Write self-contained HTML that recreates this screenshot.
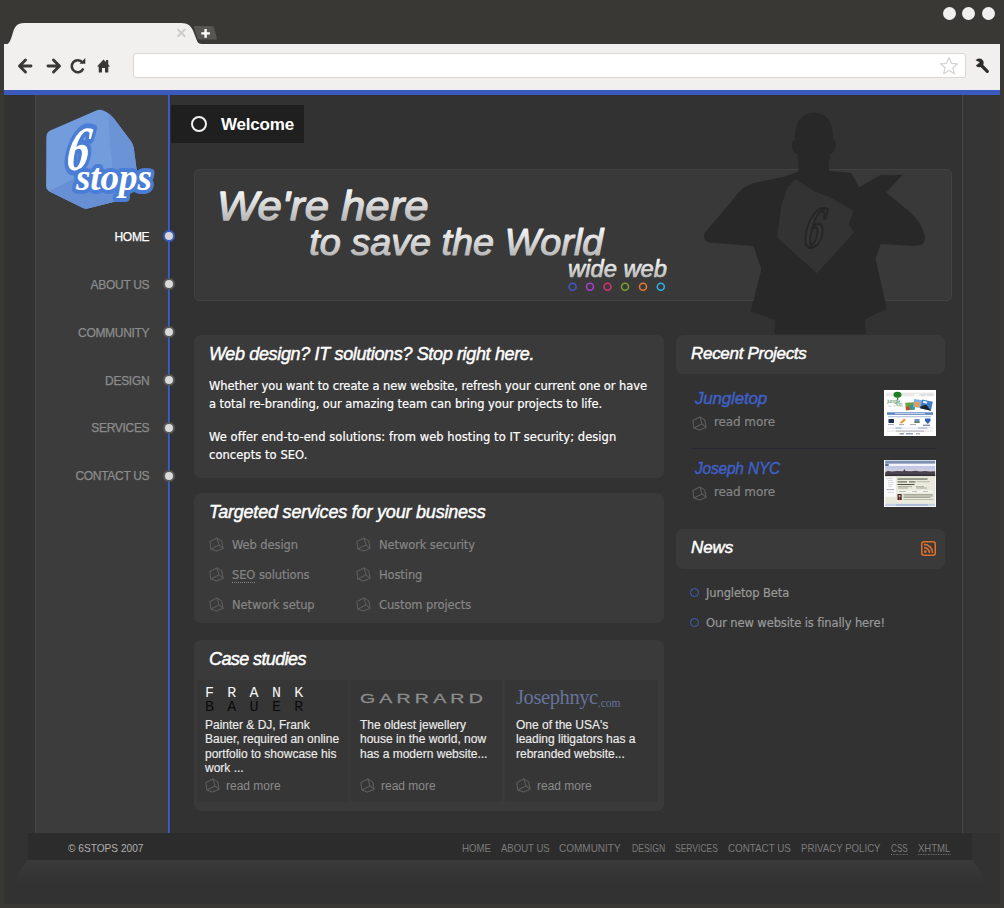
<!DOCTYPE html>
<html lang="en">
<head>
<meta charset="utf-8">
<title>6stops</title>
<style>
*{box-sizing:border-box;margin:0;padding:0}
html,body{width:1004px;height:908px;overflow:hidden}
body{background:#3a3835;font-family:"Liberation Sans",sans-serif;position:relative}
.abs{position:absolute}
/* browser chrome */
#toolbar{left:4px;top:44px;width:996px;height:46px;background:#f1f0ee}
#blue{left:4px;top:90px;width:996px;height:5px;background:#3a5bbd}
#url{left:133px;top:53px;width:833px;height:25px;background:#fff;border:1px solid #d9d8d6;border-radius:3px}
.dot{width:13px;height:13px;border-radius:50%;background:#f1f0ee;top:7px}
/* page */
#page{left:4px;top:95px;width:996px;height:809px;background:#323232;overflow:hidden}
#side{left:35px;top:95px;width:133px;height:738px;background:#3c3c3c;border-left:1px solid #444}
#vline{left:168px;top:95px;width:3px;height:738px;background:#3a5bbd;border-right:1px solid #2c2c2c}
#rline{left:962px;top:95px;width:1px;height:738px;background:#4a4a4a}
#rcol{left:963px;top:95px;width:37px;height:738px;background:#353535}
.nav{-webkit-text-stroke:.25px;right:854.700px;font-size:12px;letter-spacing:-.3px;color:#8c8c8c;white-space:nowrap;line-height:14px;text-align:right}
.nav.on{color:#fff}
.nd{left:163px;width:12px;height:12px;border-radius:50%;background:#dadada;border:2.8px solid #585858}
.nd.on{background:#d6d6d8;border-color:#3a5bbd}
#welcome{left:171px;top:105px;width:133px;height:38px;background:#1f1f1f}
#welcome b{position:absolute;left:50px;top:9px;font-size:17px;color:#fff;line-height:22px;letter-spacing:-.2px}
#welcome i{position:absolute;left:20px;top:11px;width:16px;height:16px;border:2.5px solid #f2f2f2;border-radius:50%}
.panel{background:#3a3a3a;border-radius:7px}
#hero{left:194px;top:169px;width:758px;height:132px;background:#393939;border:1px solid #424242;border-radius:5px}
.grad{background:linear-gradient(#ffffff 15%,#b9b9b9 85%);-webkit-background-clip:text;background-clip:text;color:transparent;font-style:italic;white-space:nowrap}
h2{font-weight:normal;font-style:italic;color:#fff;font-size:18px;line-height:22px;white-space:nowrap;position:absolute;letter-spacing:-.2px;-webkit-text-stroke:.45px;transform-origin:0 50%}
.body{-webkit-text-stroke:.2px;font-family:"DejaVu Sans","Liberation Sans",sans-serif;font-size:11.5px;line-height:18px;color:#fff;white-space:nowrap}
.li{-webkit-text-stroke:.2px;font-family:"DejaVu Sans","Liberation Sans",sans-serif;font-size:11.5px;line-height:16px;color:#858585;white-space:nowrap;letter-spacing:-.1px}
.card{background:#363636;top:680px;width:151px;height:122px}
.ct{-webkit-text-stroke:.15px;font-size:12px;line-height:14.3px;color:#ececec;white-space:nowrap}
.rm{font-size:12px;line-height:14px;color:#8a8a8a;white-space:nowrap}
.cube{width:15px;height:15px}
#foot{left:28px;top:833px;width:944px;height:27px;background:#2c2c2c}
.fl{font-size:11.5px;color:#7b7b7b;white-space:nowrap;line-height:13px;top:842px;transform-origin:0 50%}
</style>
</head>
<body>
<svg width="0" height="0" style="position:absolute">
  <defs>
    <g id="cube" fill="none" stroke="#5c5c5c" stroke-width="1.1" stroke-linejoin="round">
      <path d="M7.900 .9 L12.700 3.900 L14.100 11.400 L7.400 14.100 L1.800 12 L.9 4.500 Z"/>
      <path d="M7.900 .9 L10 7.900 L14.100 11.400 M10 7.900 L1.800 12"/>
    </g>
  </defs>
</svg>

<!-- browser chrome -->
<svg class="abs" style="left:0;top:0" width="260" height="46" viewBox="0 0 260 46">
  <path d="M4 46 L4 45.500 C9 44.500 10.500 41 12.500 34 C14.500 26.500 17 23 24 23 L181 23 C188 23 191 26 193 30.500 L196.500 39.500 C197.500 42.500 198.700 44 202 44 L260 44 L260 46 Z" fill="#f1f0ee"/>
  <path d="M193.800 26 L211.500 26 C213 26 213.700 26.700 214.200 28.200 L217.200 39.400 L199.500 39.400 C198.300 39.400 197.700 38.800 197.200 37.500 Z" fill="#575652"/>
  <path d="M201.300 33.400 H209.900 M205.600 29.100 V37.700" stroke="#fff" stroke-width="2.400"/>
  <path d="M177.600 29.100 L185.200 36.700 M185.200 29.100 L177.600 36.700" stroke="#cdccce" stroke-width="2"/>
</svg>
<div class="abs dot" style="left:943px"></div>
<div class="abs dot" style="left:962px"></div>
<div class="abs dot" style="left:982px"></div>
<div class="abs" id="toolbar"></div>
<div class="abs" id="url"></div>
<div class="abs" id="blue"></div>
<svg class="abs" style="left:0;top:44px" width="1004" height="46" viewBox="0 44 1004 46">
  <g stroke="#3a3835" stroke-width="2.9" fill="none" stroke-linecap="round" stroke-linejoin="round">
    <path d="M31 66 H20 M25.500 60 L19.500 66 L25.500 72"/>
    <path d="M48 66 H59 M53.500 60 L59.500 66 L53.500 72"/>
  </g>
  <path d="M82.500 62.500 A6 6 0 1 0 83.300 68.500" stroke="#3a3835" stroke-width="2.6" fill="none"/>
  <path d="M79.500 63.800 L85.300 63.800 L85.300 58 Z" fill="#3a3835"/>
  <path d="M97 66.500 L103.500 59.500 L106 62 L106 60 L108.200 60 L108.200 64.300 L110 66.500 L108.300 66.500 L108.300 72.500 L105 72.500 L105 68 L102 68 L102 72.500 L98.700 72.500 L98.700 66.500 Z" fill="#3a3835"/>
  <path d="M949 57.500 L951.500 63.300 L957.600 63.800 L952.900 67.800 L954.400 73.800 L949 70.500 L943.600 73.800 L945.100 67.800 L940.400 63.800 L946.500 63.300 Z" fill="#fff" stroke="#d4d3d1" stroke-width="1.2" stroke-linejoin="round"/>
  <g>
    <path d="M980.500 64.500 L987.300 71.300" stroke="#2e2c2a" stroke-width="3.2" stroke-linecap="round"/>
    <circle cx="979.300" cy="62.800" r="4.400" fill="#2e2c2a"/>
    <path d="M979.800 62.300 L972 58.800 L972 62 L975.500 66 Z" fill="#f1f0ee"/>
  </g>
</svg>

<!-- page -->
<div class="abs" id="page"></div>
<div class="abs" id="side"></div>
<div class="abs" id="rcol"></div>
<div class="abs" id="rline"></div>
<div class="abs" id="vline"></div>

<svg class="abs" style="left:36px;top:100px" width="130" height="115" viewBox="0 0 1004 888">
  <path d="M110 235 L470 80 Q500 68 540 90 Q575 105 600 140 L735 320 Q750 340 755 370 L780 560 L720 740 Q712 760 690 765 L400 838 Q380 842 355 830 L100 705 Q78 692 78 670 L80 285 Q82 248 110 235 Z" fill="#739cdc"/>
  <path d="M560 110 Q585 118 600 140 L735 320 Q750 340 755 370 L780 560 L720 740 L600 610 L570 330 Z" fill="#6b94d7"/>
  <path d="M100 705 L330 590 L600 610 L720 740 Q712 760 690 765 L400 838 Q380 842 355 830 Z" fill="#6790d4"/>
  <g font-family="'Liberation Serif',serif" font-style="italic" font-weight="bold" fill="#fff" stroke="#4a7dd6" stroke-linejoin="round" paint-order="stroke">
    <text x="0" y="0" font-size="400" stroke-width="62" transform="translate(222 540) skewX(-9) scale(.86 1.22)">6</text>
    <text x="308" y="694" font-size="300" stroke-width="62" textLength="588" lengthAdjust="spacingAndGlyphs">stops</text>
  </g>
</svg>

<div class="abs nav on" style="top:229.5px">HOME</div><div class="abs nd on" style="top:230.0px"></div>
<div class="abs nav" style="top:277.5px">ABOUT US</div><div class="abs nd" style="top:278.0px"></div>
<div class="abs nav" style="top:325.5px">COMMUNITY</div><div class="abs nd" style="top:326.0px"></div>
<div class="abs nav" style="top:373.5px">DESIGN</div><div class="abs nd" style="top:374.0px"></div>
<div class="abs nav" style="top:421px">SERVICES</div><div class="abs nd" style="top:421.5px"></div>
<div class="abs nav" style="top:469px">CONTACT US</div><div class="abs nd" style="top:469.5px"></div>

<div class="abs" id="welcome"><i></i><b>Welcome</b></div>

<div class="abs" id="hero"></div>
<svg class="abs" style="left:194px;top:169px" width="500" height="132" viewBox="194 169 500 132">
  <defs>
    <linearGradient id="g1" gradientUnits="userSpaceOnUse" x1="0" y1="186" x2="0" y2="222"><stop offset="0" stop-color="#fff"/><stop offset="1" stop-color="#b4b4b4"/></linearGradient>
    <linearGradient id="g2" gradientUnits="userSpaceOnUse" x1="0" y1="225" x2="0" y2="257"><stop offset="0" stop-color="#fff"/><stop offset="1" stop-color="#b4b4b4"/></linearGradient>
    <linearGradient id="g3" gradientUnits="userSpaceOnUse" x1="0" y1="259" x2="0" y2="279"><stop offset="0" stop-color="#fff"/><stop offset="1" stop-color="#b4b4b4"/></linearGradient>
  </defs>
  <g font-family="'Liberation Sans',sans-serif" font-style="italic" stroke-linejoin="round">
    <text id="h1a" x="217" y="219.700" font-size="41.500" fill="url(#g1)" stroke="url(#g1)" stroke-width="1.3" textLength="211.500" lengthAdjust="spacingAndGlyphs">We're here</text>
    <text id="h1b" x="309.300" y="255" font-size="37" fill="url(#g2)" stroke="url(#g2)" stroke-width="1.1" textLength="294" lengthAdjust="spacingAndGlyphs">to save the World</text>
    <text id="h1c" x="568" y="277.200" font-size="24" fill="url(#g3)" stroke="url(#g3)" stroke-width=".7" textLength="99" lengthAdjust="spacingAndGlyphs">wide web</text>
  </g>
  <g fill="none" stroke-width="1.6">
    <circle cx="572.600" cy="286.700" r="3.500" stroke="#4157c0"/>
    <circle cx="590" cy="286.700" r="3.500" stroke="#a63fd0"/>
    <circle cx="607.500" cy="286.700" r="3.500" stroke="#d6336f"/>
    <circle cx="625" cy="286.700" r="3.500" stroke="#7a9e2d"/>
    <circle cx="643" cy="286.700" r="3.500" stroke="#e2792f"/>
    <circle cx="660.800" cy="286.700" r="3.500" stroke="#2fb0e0"/>
  </g>
</svg>
<svg class="abs" style="left:690px;top:100px" width="260" height="240" viewBox="0 0 984 908">
  <path fill="#282828" d="M470 48 C520 48 545 90 540 150 C552 150 556 165 548 185 C544 198 538 203 530 203 C528 225 524 250 526 268 L610 275 L640 330 L720 285 L805 283 L742 350 L782 382 C830 420 862 450 872 472 C884 498 892 515 888 530 C884 548 870 552 850 552 L722 545 L702 600 L745 790 L662 830 L666 886 L320 886 L322 832 L230 800 L270 640 L240 552 L80 540 C55 538 48 520 56 502 L160 380 C190 335 215 322 250 312 L355 290 L410 270 C412 250 410 225 405 203 C395 203 390 195 388 185 C382 165 386 152 398 150 C394 90 420 48 470 48 Z"/>
  <path fill="#333" d="M400 300 L470 345 L530 368 L620 420 L600 470 L622 500 L480 656 L330 520 L345 400 L370 330 Z"/>
  <text x="0" y="0" transform="translate(425 558) skewX(-10) scale(.85 1.3)" font-family="'Liberation Serif',serif" font-style="italic" font-weight="bold" font-size="170" fill="#363636" stroke="#262626" stroke-width="8">6</text>
</svg>

<div class="abs panel" style="left:194px;top:335px;width:470px;height:143px"></div>
<h2 id="hd1" style="left:209px;top:343px;letter-spacing:-.35px">Web design? IT solutions? Stop right here.</h2>
<div class="abs body" id="p1" style="left:209px;top:377px;letter-spacing:-.06px">Whether you want to create a new website, refresh your current one or have<br>a total re-branding, our amazing team can bring your projects to life.</div>
<div class="abs body" id="p2" style="left:209px;top:428px;letter-spacing:.06px">We offer end-to-end solutions: from web hosting to IT security; design<br>concepts to SEO.</div>

<div class="abs panel" style="left:194px;top:493px;width:470px;height:130px"></div>
<h2 id="hd2" style="left:209px;top:501px">Targeted services for your business</h2>
<svg class="abs cube" style="left:209px;top:536.5px" viewBox="0 0 15 15"><use href="#cube"/></svg><div class="abs li" style="left:232px;top:536.5px">Web design</div>
<svg class="abs cube" style="left:209px;top:566.5px" viewBox="0 0 15 15"><use href="#cube"/></svg><div class="abs li" style="left:232px;top:566.5px"><span style="border-bottom:1px dotted #858585">SEO</span> solutions</div>
<svg class="abs cube" style="left:209px;top:596.5px" viewBox="0 0 15 15"><use href="#cube"/></svg><div class="abs li" style="left:232px;top:596.5px">Network setup</div>
<svg class="abs cube" style="left:356px;top:536.5px" viewBox="0 0 15 15"><use href="#cube"/></svg><div class="abs li" style="left:379px;top:536.5px">Network security</div>
<svg class="abs cube" style="left:356px;top:566.5px" viewBox="0 0 15 15"><use href="#cube"/></svg><div class="abs li" style="left:379px;top:566.5px">Hosting</div>
<svg class="abs cube" style="left:356px;top:596.5px" viewBox="0 0 15 15"><use href="#cube"/></svg><div class="abs li" style="left:379px;top:596.5px">Custom projects</div>
<div class="abs panel" style="left:194px;top:640px;width:470px;height:171px"></div>
<h2 id="hd3" style="left:209px;top:648px;letter-spacing:-.6px">Case studies</h2>
<div class="abs card" style="left:197px"></div>
<div class="abs card" style="left:351px"></div>
<div class="abs card" style="left:505px;width:153px"></div>
<div class="abs" id="fb1" style="left:205px;top:686px;font-family:'Liberation Mono',monospace;font-size:15px;line-height:16px;color:#f4f4f4;white-space:nowrap;letter-spacing:13.3px">FRANK</div>
<div class="abs" id="fb2" style="left:205px;top:699.5px;font-family:'Liberation Mono',monospace;font-size:15px;line-height:16px;color:#0c0c0c;white-space:nowrap;letter-spacing:13.3px">BAUER</div>
<div class="abs ct" id="c1" style="left:205px;top:718px">Painter &amp; DJ, Frank<br>Bauer, required an online<br>portfolio to showcase his<br>work ...</div>
<div class="abs" id="gar" style="left:360px;top:690.500px;font-size:13px;line-height:16px;color:#8c8c8c;white-space:nowrap;letter-spacing:2.800px;-webkit-text-stroke:.3px;transform:scaleX(1.5);transform-origin:0 0">GARRARD</div>
<div class="abs ct" id="c2" style="left:360px;top:718px">The oldest jewellery<br>house in the world, now<br>has a modern website...</div>
<div class="abs" id="jos" style="left:516px;top:685px;font-family:'Liberation Serif',serif;font-size:20.5px;line-height:24px;color:#66739c;white-space:nowrap;letter-spacing:-.4px">Josephnyc<span style="font-size:11.5px;letter-spacing:0;position:relative;top:3px">.com</span></div>
<div class="abs ct" id="c3" style="left:516px;top:718px">One of the USA's<br>leading litigators has a<br>rebranded website...</div>
<svg class="abs cube" style="left:205px;top:778px" viewBox="0 0 15 15"><use href="#cube"/></svg><div class="abs rm" style="left:226px;top:779px">read more</div>
<svg class="abs cube" style="left:360px;top:778px" viewBox="0 0 15 15"><use href="#cube"/></svg><div class="abs rm" style="left:381px;top:779px">read more</div>
<svg class="abs cube" style="left:516px;top:778px" viewBox="0 0 15 15"><use href="#cube"/></svg><div class="abs rm" style="left:537px;top:779px">read more</div>

<div class="abs panel" style="left:676px;top:335px;width:269px;height:39px"></div>
<h2 id="hd4" style="left:691px;top:342.5px;font-size:17px;letter-spacing:-.3px">Recent Projects</h2>
<h2 id="pj1" style="left:695px;top:388px;font-size:17px;color:#3f60c6">Jungletop</h2>
<svg class="abs cube" style="left:692px;top:415.500px" viewBox="0 0 15 15"><use href="#cube"/></svg><div class="abs li" id="rm1" style="left:714px;top:414px;font-size:12px">read more</div>
<div class="abs" style="left:691px;top:448px;width:245px;height:0;border-top:1px dotted #1f2134"></div>
<h2 id="pj2" style="left:695px;top:458px;font-size:17px;transform:scaleX(.91);color:#3f60c6">Joseph NYC</h2>
<svg class="abs cube" style="left:692px;top:485.500px" viewBox="0 0 15 15"><use href="#cube"/></svg><div class="abs li" id="rm2" style="left:714px;top:484px;font-size:12px">read more</div>
<svg class="abs" style="left:884px;top:390px" width="52" height="46" viewBox="0 0 52 46">
  <rect width="52" height="46" fill="#fff"/>
  <rect x="2" y="2.600" width="48" height="3.800" fill="#e9e9e9"/>
  <rect x="30" y="4" width="5" height="1.600" fill="#fff"/><rect x="37" y="4" width="4.500" height="1.600" fill="#dcdcdc"/><rect x="43.500" y="4" width="5" height="1.600" fill="#dcdcdc"/>
  <ellipse cx="13.500" cy="4.800" rx="4" ry="3" fill="#1f7d22"/>
  <rect x="13" y="7" width="1.200" height="3" fill="#3c7d4c"/>
  <text x="3.200" y="12.500" font-family="'Liberation Sans',sans-serif" font-size="5.500" fill="#3f8a5a" letter-spacing="-.3">jungle</text>
  <text x="12" y="16" font-family="'Liberation Sans',sans-serif" font-size="5" fill="#5a9a6e" letter-spacing="-.3">top</text>
  <g transform="rotate(-4 26 16)"><rect x="21.500" y="12.500" width="9" height="7.500" fill="#6c9e3a"/><rect x="22" y="16.500" width="3.500" height="3.500" fill="#c2452f"/><rect x="26" y="15" width="4.500" height="4.500" fill="#2d96a5"/></g>
  <g transform="rotate(8 33 14)"><rect x="29.500" y="9.500" width="8" height="8" fill="#7fb1e2"/><rect x="31" y="12" width="4.500" height="5" fill="#f09a3e"/></g>
  <g transform="rotate(12 42 15)"><rect x="37" y="10.500" width="11" height="9" fill="#3f7fc6"/><path d="M37 17.500 L42 14.500 L48 19.500 L37 19.500 Z" fill="#1c2430"/><rect x="38.500" y="11.500" width="4" height="2" fill="#e9f1fa"/></g>
  <rect x="4" y="15.500" width="3" height="1" fill="#d5d5d5"/><rect x="9" y="15.500" width="3" height="1" fill="#d5d5d5"/><rect x="14" y="15.500" width="5" height="1" fill="#d5d5d5"/>
  <rect x="3" y="22.300" width="46" height="2.600" fill="#5c87c0"/><rect x="11" y="23.100" width="30" height="1" fill="#c9d9ee"/>
  <rect x="4" y="26.300" width="43" height=".9" fill="#9fb4d0"/>
  <rect x="4.500" y="29" width="5.500" height="4" rx=".6" fill="#1f2a5c"/>
  <path d="M15.500 33 L20 28.500 L22 30 L18 33.500 Z" fill="#ee9b32"/>
  <rect x="30.500" y="29" width="5" height="4" fill="#6a8fc4"/><rect x="30.500" y="31.500" width="5" height="1.500" fill="#5d7d4b"/>
  <path d="M41 28.500 L46.500 28.500 L46.500 31 L43.800 34 L41 31 Z" fill="#2b62b8"/>
  <rect x="4" y="34.300" width="6" height=".8" fill="#8d8d9c"/><rect x="15" y="34.300" width="5" height=".8" fill="#8d8d9c"/><rect x="26" y="34.300" width="6" height=".8" fill="#8d8d9c"/><rect x="39" y="34.600" width="7" height="1.400" fill="#7f8fb0"/>
  <rect x="3" y="37.600" width="46" height=".9" fill="#d9dde6"/><rect x="11.500" y="37.600" width="6" height=".9" fill="#8fa0c4"/><rect x="34" y="37.600" width="9.500" height=".9" fill="#8fa0c4"/>
  <rect x="3" y="40.600" width="46" height=".9" fill="#dedede"/><rect x="12" y="40.600" width="28" height=".9" fill="#a9a9b3"/>
  <rect x="15.500" y="43.300" width="4.500" height="1" fill="#5f6f9f"/><rect x="22" y="43.300" width="7" height="1" fill="#5f6f9f"/><rect x="32" y="43.300" width="4" height="1" fill="#8b8b98"/>
</svg>
<svg class="abs" style="left:884px;top:460px" width="52" height="47" viewBox="0 0 52 47">
  <defs><linearGradient id="sky" x1="0" y1="0" x2="0" y2="1"><stop offset="0" stop-color="#bcc3ea"/><stop offset="1" stop-color="#d9d3dc"/></linearGradient></defs>
  <rect width="52" height="47" fill="#fff"/>
  <rect x="1.200" y=".6" width="50" height="3.200" fill="#7d91b1"/>
  <rect x="1.200" y="3.800" width="50" height="2.300" fill="#f3f5fa"/><rect x="1.200" y="3.800" width="3.500" height="2.300" fill="#5e6f96"/>
  <rect x="1.200" y="6.100" width="50" height="6" fill="url(#sky)"/>
  <path d="M1.200 12 L4 11 L8 11.500 L13 11 L19 11.300 L20.500 9 L21.500 11 L27 11.300 L32 10.800 L36 11.400 L41 10.900 L46 11.500 L51.200 11.200 L51.200 16.200 L1.200 16.200 Z" fill="#4a4450"/>
  <rect x="1.200" y="14.500" width="50" height="1.700" fill="#352f38"/>
  <rect x="1.200" y="16.200" width="50" height="28" fill="#e9eadc"/>
  <rect x="1.200" y="16.800" width="10.800" height="20" fill="#fafafa"/>
  <g fill="#c8cbd6"><rect x="2.500" y="18" width="6" height=".8"/><rect x="4" y="20" width="5" height=".7"/><rect x="4" y="22" width="6" height=".7"/><rect x="4" y="24.300" width="5" height=".7"/><rect x="4" y="26.300" width="4" height=".7"/><rect x="2.500" y="29.200" width="7.500" height=".9" fill="#9ea2b0"/><rect x="4" y="32" width="6" height=".7"/></g>
  <g fill="#8f907f"><rect x="13.500" y="18.200" width="30" height="1.700"/><rect x="13.500" y="21" width="9.500" height="1.700"/><rect x="25" y="21" width="6.500" height="1.700"/><rect x="33" y="21.200" width="13" height="1" fill="#b9baa9"/></g>
  <rect x="13.500" y="24" width="17" height="1" fill="#4c4c44"/>
  <g fill="#9b9c8c"><rect x="14" y="26.300" width="14" height=".8"/><rect x="14" y="27.600" width="10" height=".8"/><rect x="32" y="26.300" width="8" height=".8"/><rect x="32" y="27.600" width="11" height=".8"/></g>
  <rect x="13.500" y="30.300" width="35" height="2.500" fill="#f4f5ee"/><rect x="15" y="31.200" width="7" height=".8" fill="#a7b3a0"/><rect x="28" y="31.200" width="5" height=".8" fill="#b5b5b5"/><rect x="39" y="31.200" width="5" height=".8" fill="#b5b5b5"/>
  <rect x="13.500" y="34" width="4.200" height="6" fill="#3a2c2c"/><rect x="14.700" y="35" width="1.800" height="2.200" fill="#d8a58c"/><rect x="15" y="37.500" width="1.200" height="2.500" fill="#c23a3a"/>
  <g fill="#8e8f80"><rect x="19.500" y="34.300" width="29" height=".8"/><rect x="19.500" y="35.600" width="30" height=".8"/><rect x="19.500" y="36.900" width="27" height=".8"/><rect x="19.500" y="39" width="30" height=".8" fill="#b1b2a2"/></g>
  <rect x="1.200" y="43.800" width="50" height="2.400" fill="#c5d0e4"/><rect x="12" y="44.600" width="32" height=".8" fill="#8c9cc0"/>
</svg>

<div class="abs panel" style="left:676px;top:529px;width:269px;height:40px"></div>
<h2 id="hd5" style="left:691px;top:537px;font-size:17px;letter-spacing:-.1px">News</h2>
<svg class="abs" style="left:921px;top:541px" width="15" height="15" viewBox="0 0 15 15">
  <rect x=".75" y=".75" width="13.5" height="13.5" rx="2.2" fill="#3a3a3a" stroke="#e0702c" stroke-width="1.5"/>
  <circle cx="4.3" cy="10.7" r="1.4" fill="#e0702c"/>
  <path d="M3 6.600 A5.400 5.400 0 0 1 8.400 12 M3 3.400 A8.600 8.600 0 0 1 11.600 12" fill="none" stroke="#e0702c" stroke-width="1.6"/>
</svg>
<div class="abs" style="left:690px;top:588px;width:9px;height:9px;border:1.7px solid #3f60c6;border-radius:50%"></div>
<div class="abs li" id="n1" style="left:706px;top:585px;color:#9a9a9a">Jungletop Beta</div>
<div class="abs" style="left:690px;top:618px;width:9px;height:9px;border:1.7px solid #3f60c6;border-radius:50%"></div>
<div class="abs li" id="n2" style="left:706px;top:615px;color:#9a9a9a">Our new website is finally here!</div>

<svg class="abs" style="left:4px;top:860px" width="996" height="26" viewBox="4 860 996 26"><defs><linearGradient id="fold" x1="0" y1="0" x2="0" y2="1"><stop offset="0" stop-color="#3a3a3a"/><stop offset="1" stop-color="#323232"/></linearGradient></defs><path d="M28 860 L972 860 L990 884 L10 884 Z" fill="url(#fold)"/></svg>
<div class="abs" id="foot"></div>
<div class="abs fl" id="f0" style="transform:scaleX(0.882);left:67.7px;color:#b0b0b0;">© 6STOPS 2007</div>
<div class="abs fl" id="f1" style="transform:scaleX(0.841);left:461.7px;">HOME</div>
<div class="abs fl" id="f2" style="transform:scaleX(0.831);left:500.5px;">ABOUT US</div>
<div class="abs fl" id="f3" style="transform:scaleX(0.869);left:559.3px;">COMMUNITY</div>
<div class="abs fl" id="f4" style="transform:scaleX(0.751);left:631.8px;">DESIGN</div>
<div class="abs fl" id="f5" style="transform:scaleX(0.741);left:674.8px;">SERVICES</div>
<div class="abs fl" id="f6" style="transform:scaleX(0.853);left:728.1px;">CONTACT US</div>
<div class="abs fl" id="f7" style="transform:scaleX(0.839);left:801.4px;">PRIVACY POLICY</div>
<div class="abs fl" id="f8" style="transform:scaleX(0.709);left:891.3px;"><span style="border-bottom:1px dotted #7d7d7d">CSS</span></div>
<div class="abs fl" id="f9" style="transform:scaleX(0.831);left:918.4px;"><span style="border-bottom:1px dotted #7d7d7d">XHTML</span></div>
</body>
</html>
